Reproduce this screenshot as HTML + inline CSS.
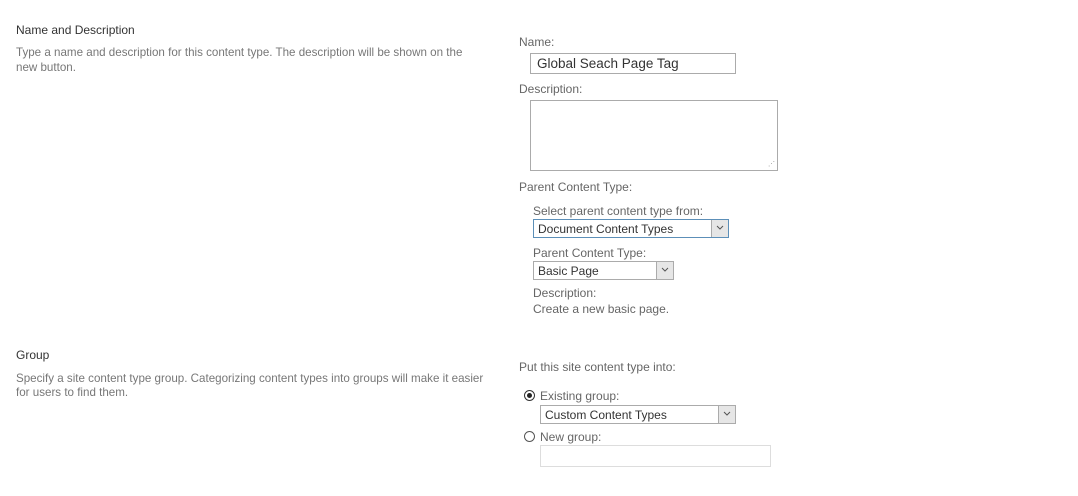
<!DOCTYPE html>
<html><head><style>
body{margin:0;width:1078px;height:496px;background:#fff;font-family:"Liberation Sans",sans-serif;position:relative;overflow:hidden}
.a{position:absolute;white-space:nowrap;line-height:1}
.h{font-size:12px;color:#333}
.d{font-size:11.6px;color:#777}
.l{font-size:12px;color:#666}
.box{position:absolute;border:1px solid #ababab;background:#fff;box-sizing:border-box}
.sel{position:absolute;border:1px solid #ababab;box-sizing:border-box;background:#fff;font-size:12px;color:#333}
.sel span{position:absolute;left:4px;top:3px}
.arr{position:absolute;right:0;top:0;bottom:0;width:16px;background:#e6e6e6;border-left:1px solid #ababab}
.arr svg{position:absolute;left:4px;top:5px}
.rad{position:absolute;width:11px;height:11px;border:1px solid #333;border-radius:50%;box-sizing:border-box;background:#fff}
</style></head><body>
<div class="a h" style="left:16px;top:24px">Name and Description</div>
<div class="a d" style="left:16px;top:47px">Type a name and description for this content type. The description will be shown on the</div>
<div class="a d" style="left:16px;top:62px">new button.</div>

<div class="a l" style="left:519px;top:36px">Name:</div>
<div class="box" style="left:530px;top:53px;width:206px;height:21px"><span class="a" style="left:6px;top:3px;font-size:13.5px;color:#333">Global Seach Page Tag</span></div>
<div class="a l" style="left:519px;top:83px">Description:</div>
<div class="box" style="left:530px;top:100px;width:248px;height:71px"><span class="a" style="right:2px;bottom:2px;font-size:7px;color:#999">⋰</span></div>
<div class="a l" style="left:519px;top:181px">Parent Content Type:</div>
<div class="a l" style="left:533px;top:205px">Select parent content type from:</div>
<div class="sel" style="left:533px;top:219px;width:196px;height:19px;border-color:#5c8fb8"><span style="top:2px">Document Content Types</span><div class="arr"><svg width="8" height="6"><path d="M1 1L4 4L7 1" fill="none" stroke="#555"/></svg></div></div>
<div class="a l" style="left:533px;top:247px">Parent Content Type:</div>
<div class="sel" style="left:533px;top:261px;width:141px;height:19px"><span style="top:2px">Basic Page</span><div class="arr"><svg width="8" height="6"><path d="M1 1L4 4L7 1" fill="none" stroke="#555"/></svg></div></div>
<div class="a l" style="left:533px;top:287px">Description:</div>
<div class="a l" style="left:533px;top:303px">Create a new basic page.</div>

<div class="a h" style="left:16px;top:349px">Group</div>
<div class="a d" style="left:16px;top:373px">Specify a site content type group. Categorizing content types into groups will make it easier</div>
<div class="a d" style="left:16px;top:387px">for users to find them.</div>

<div class="a l" style="left:519px;top:361px">Put this site content type into:</div>
<div class="rad" style="left:524px;top:390px"><div style="position:absolute;left:2px;top:2px;width:5px;height:5px;border-radius:50%;background:#222"></div></div>
<div class="a l" style="left:540px;top:390px">Existing group:</div>
<div class="sel" style="left:540px;top:405px;width:196px;height:19px"><span style="top:2px">Custom Content Types</span><div class="arr"><svg width="8" height="6"><path d="M1 1L4 4L7 1" fill="none" stroke="#555"/></svg></div></div>
<div class="rad" style="left:524px;top:431px;border-color:#555"></div>
<div class="a l" style="left:540px;top:431px">New group:</div>
<div class="box" style="left:540px;top:445px;width:231px;height:22px;border-color:#ddd"></div>
</body></html>
